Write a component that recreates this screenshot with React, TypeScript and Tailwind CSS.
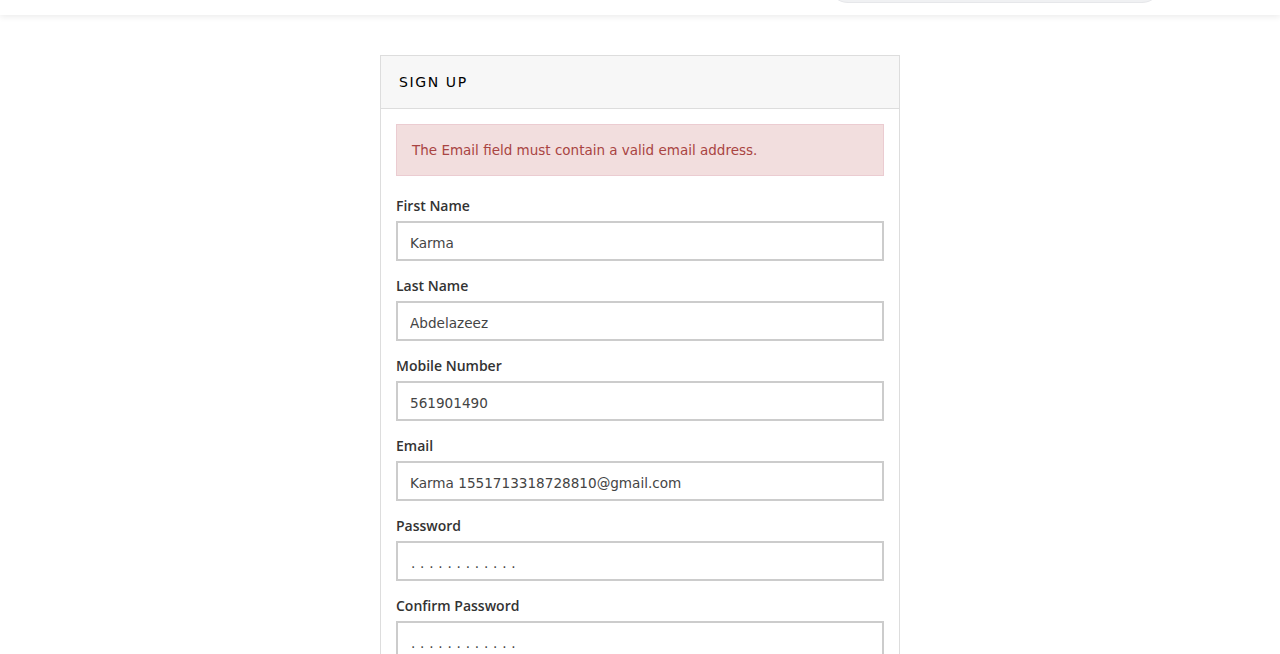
import React from "react";

const fields = [
  { label: "First Name", value: "Karma" },
  { label: "Last Name", value: "Abdelazeez" },
  { label: "Mobile Number", value: "561901490" },
  { label: "Email", value: "Karma 1551713318728810@gmail.com" },
  { label: "Password", value: "............", secret: true },
  { label: "Confirm Password", value: "............", secret: true },
];

export default function App() {
  return (
    <div className="min-h-screen bg-white text-[#333] font-['DejaVu_Sans',sans-serif]">
      {/* top bar (scrolled) */}
      <div className="h-[15px] overflow-hidden bg-white shadow-[0_2px_6px_rgba(0,0,0,0.08)] relative z-10">
        <div className="ml-[828px] -mt-[37px] h-[40px] w-[334px] rounded-full bg-[#f0f1f3] border border-[#e6e7ea]" />
      </div>

      <div className="flex justify-center pt-[40px] pb-10">
        <div className="w-[520px] border border-[#ddd] bg-white">
          <div className="h-[53px] bg-[#f7f7f7] border-b border-[#ddd] flex items-center px-[18px]">
            <span className="text-[14px] tracking-[1.6px] text-black">SIGN UP</span>
          </div>

          <div className="p-[15px]">
            <div className="h-[52px] bg-[#f2dede] border border-[#ebccd1] text-[#a94442] text-[13.5px] flex items-center px-[15px] mb-[20px]">
              The Email field must contain a valid email address.
            </div>

            {fields.map((f) => (
              <div key={f.label} className="mb-[15px]">
                <label className="block font-['Open_Sans',sans-serif] text-[14px] leading-[20px] font-semibold text-[#333] mb-[5px]">{f.label}</label>
                <input
                  readOnly
                  value={f.value}
                  className={`block w-full h-[40px] border-2 border-[#ccc] pt-[4px] text-[13.6px] text-[#444] outline-none ${f.secret ? "pl-[13px] tracking-[4.8px]" : "px-[12px]"}`}
                />
              </div>
            ))}
          </div>
        </div>
      </div>
    </div>
  );
}
